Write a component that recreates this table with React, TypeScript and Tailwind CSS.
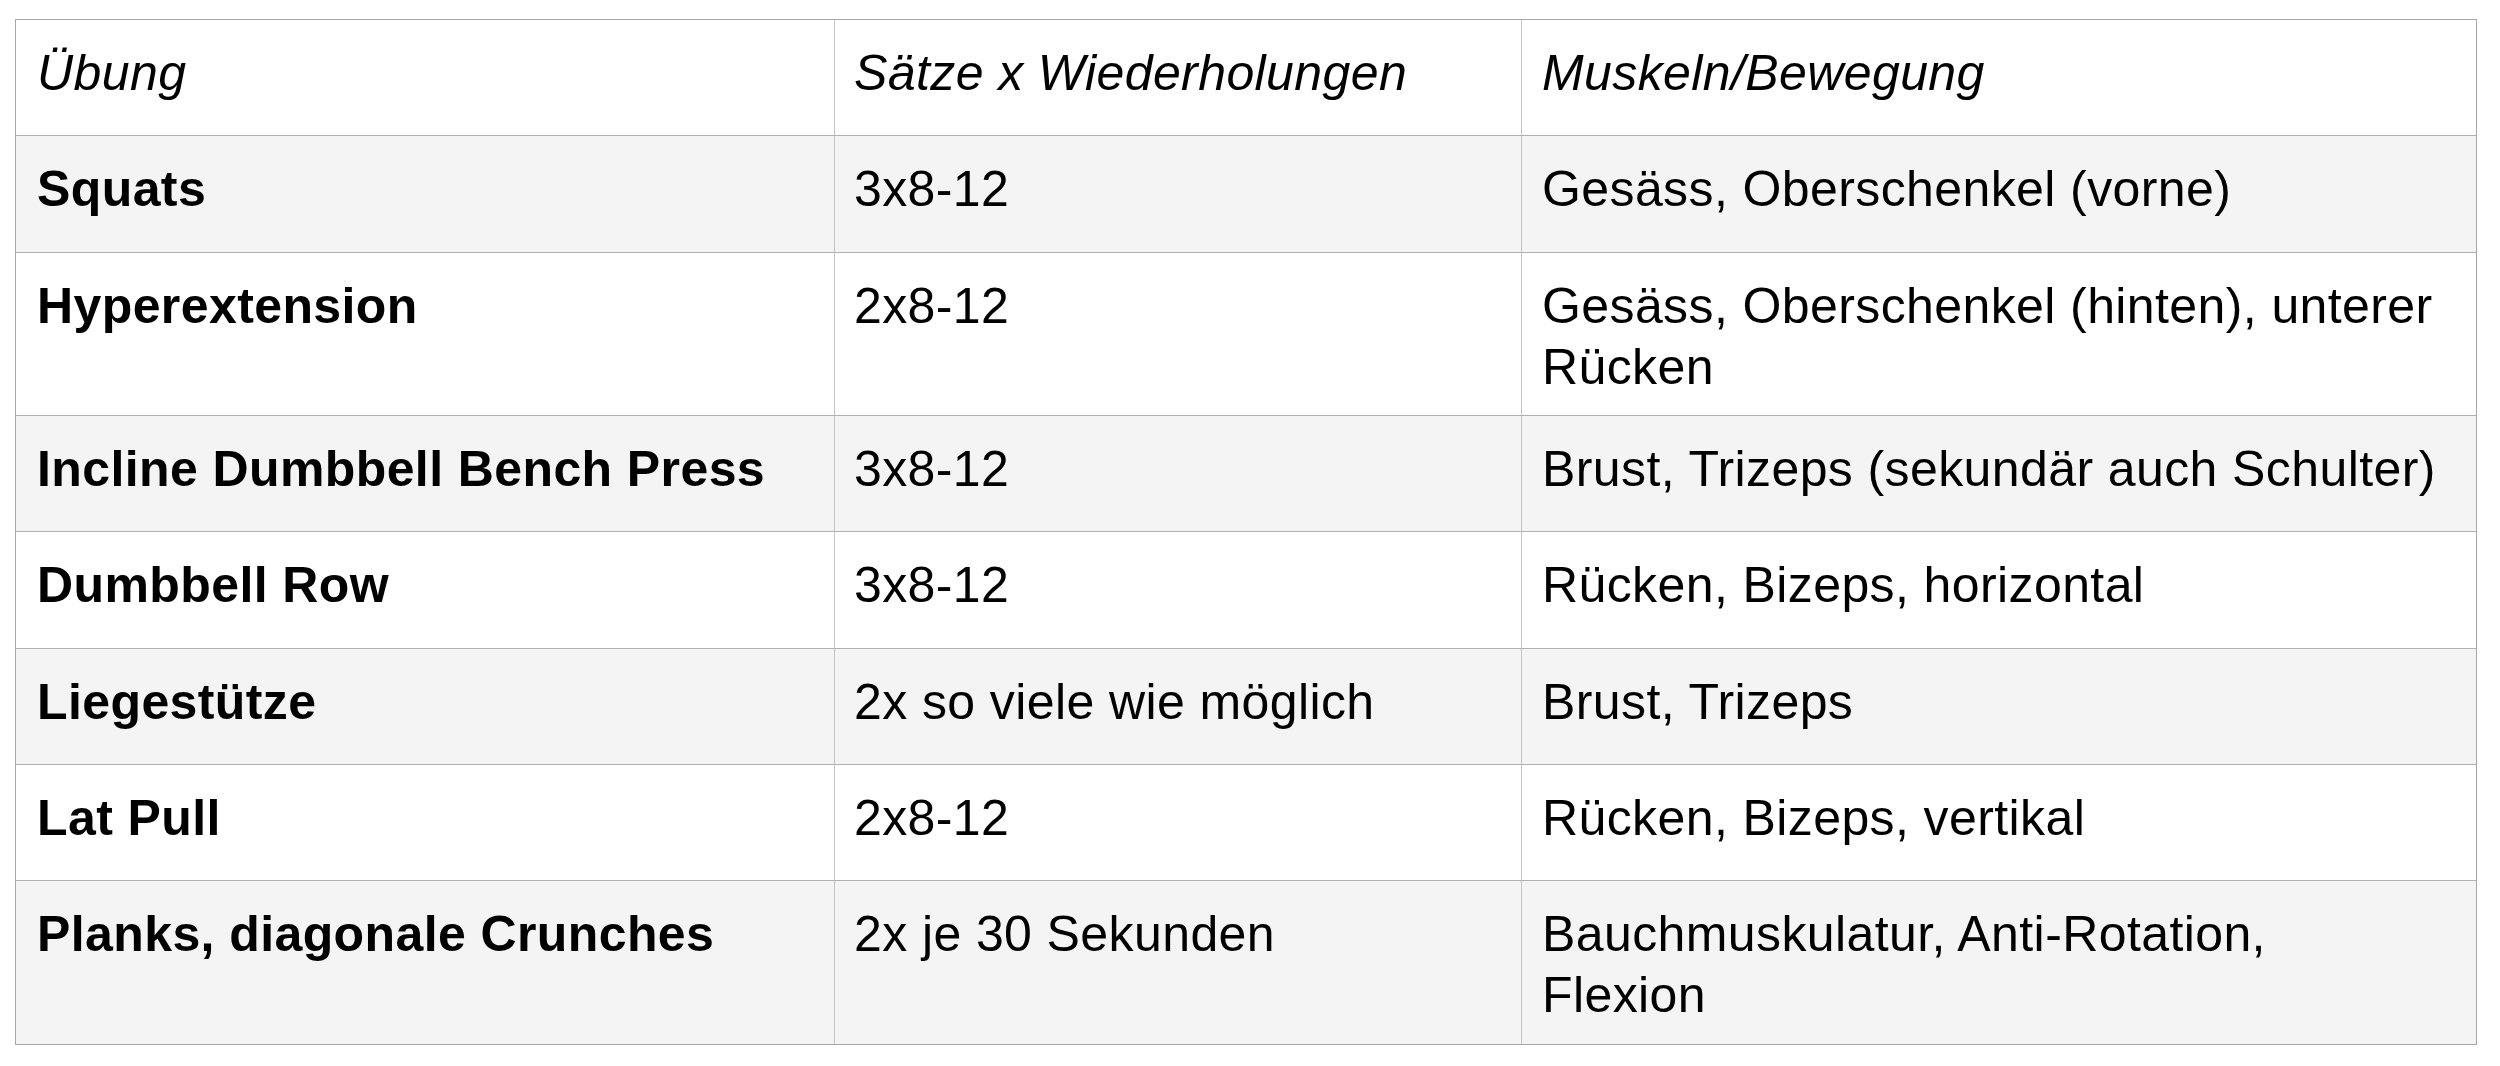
const rows = [
  { name: "Squats", sets: "3x8-12", muscles: "Gesäss, Oberschenkel (vorne)", h: "h-[117px]" },
  { name: "Hyperextension", sets: "2x8-12", muscles: "Gesäss, Oberschenkel (hinten), unterer\nRücken", h: "h-[163px]" },
  { name: "Incline Dumbbell Bench Press", sets: "3x8-12", muscles: "Brust, Trizeps (sekundär auch Schulter)", h: "h-[116px]" },
  { name: "Dumbbell Row", sets: "3x8-12", muscles: "Rücken, Bizeps, horizontal", h: "h-[117px]" },
  { name: "Liegestütze", sets: "2x so viele wie möglich", muscles: "Brust, Trizeps", h: "h-[116px]" },
  { name: "Lat Pull", sets: "2x8-12", muscles: "Rücken, Bizeps, vertikal", h: "h-[116px]" },
  { name: "Planks, diagonale Crunches", sets: "2x je 30 Sekunden", muscles: "Bauchmuskulatur, Anti-Rotation,\nFlexion", h: "h-[163px]" },
];

function Row({
  cells,
  className,
  bold,
  italic,
  last,
}: {
  cells: string[];
  className: string;
  bold?: boolean;
  italic?: boolean;
  last?: boolean;
}) {
  return (
    <div
      className={`grid grid-cols-[819px_687px_1fr] ${className} ${
        last ? "" : "border-b border-[#b0b0b0]"
      }`}
    >
      {cells.map((c, i) => (
        <div
          key={i}
          className={`whitespace-pre-line pt-[23px] pr-[10px] ${i === 0 ? "pl-[21px]" : i === 1 ? "pl-[19px]" : "pl-[20px]"} ${
            i < 2 ? "border-r border-[#c4c4c4]" : ""
          } ${i === 0 && bold ? "font-bold" : ""} ${italic ? "italic" : ""}`}
        >
          {c}
        </div>
      ))}
    </div>
  );
}

export default function App() {
  return (
    <div className="min-h-[1066px] bg-white pt-[19px] pl-[15px] font-['Liberation_Sans',Arial,sans-serif] text-[50px] leading-[61px] tracking-[0.4px] text-black">
      <div className="w-[2462px] border border-[#a8a8a8]">
        <Row
          cells={["Übung", "Sätze x Wiederholungen", "Muskeln/Bewegung"]}
          className="h-[116px] bg-white"
          italic
        />
        {rows.map((r, i) => (
          <Row
            key={r.name}
            cells={[r.name, r.sets, r.muscles]}
            className={`${r.h} ${i % 2 === 0 ? "bg-[#f4f4f4]" : "bg-white"}`}
            bold
            last={i === rows.length - 1}
          />
        ))}
      </div>
    </div>
  );
}
